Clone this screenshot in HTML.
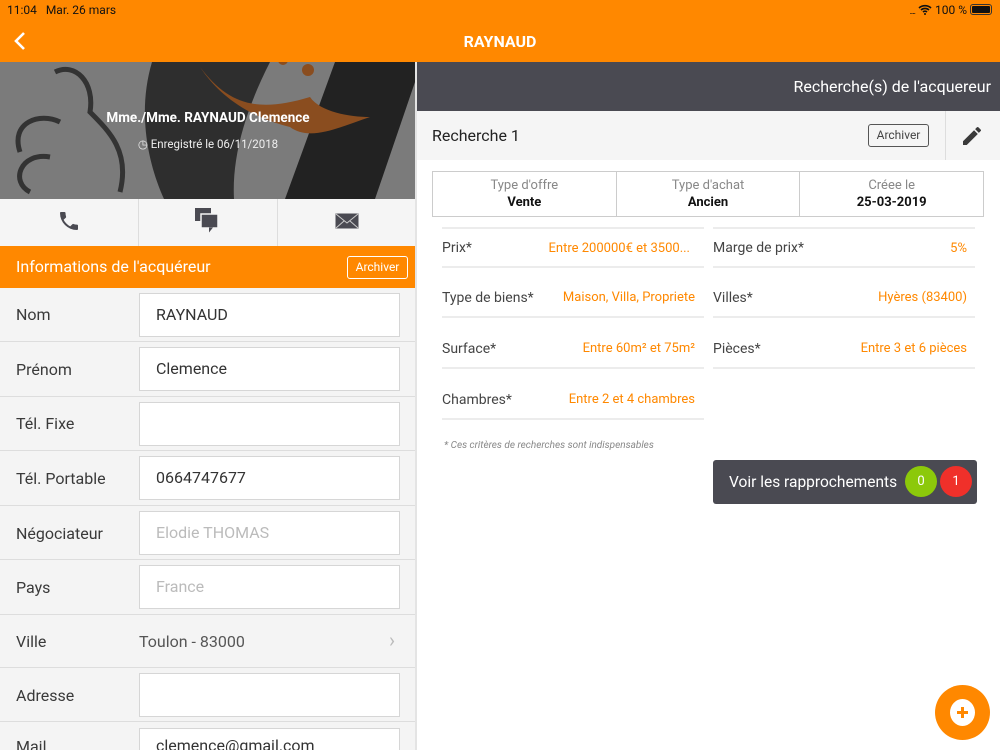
<!DOCTYPE html>
<html><head><meta charset="utf-8"><style>
*{box-sizing:border-box;margin:0;padding:0}
html,body{width:1000px;height:750px;overflow:hidden}
body{font-family:"Roboto","Liberation Sans",sans-serif;background:#fff;position:relative}
.abs{position:absolute}
.top{left:0;top:0;width:1000px;height:62px;background:#ff8800}
.row{position:absolute;left:0;width:416px;background:#f4f4f4;border-bottom:1px solid #ddd}
.row .l{position:absolute;left:16px;font-size:16px;color:#3a3a3a}
.row .in{position:absolute;left:139px;width:261px;height:44px;background:#fff;border:1px solid #d6d6d6;font-size:16px;color:#333;padding-left:16px;line-height:42px}
.crit{position:absolute;height:50px;border-bottom:2px solid #ececec;font-size:14px;color:#444}
.crit .k{position:absolute;left:0;top:12px}
.crit .v{position:absolute;right:8px;top:13px;color:#ff8800;font-size:13px}
</style></head><body>
<div class="abs top">
 <div class="abs" style="left:7px;top:3px;font-size:12px;color:#111">11:04&nbsp;&nbsp; Mar. 26 mars</div>
 <div class="abs" style="right:8px;top:3px;font-size:12px;color:#111">
  <span style="font-size:9px;letter-spacing:-1px">....</span> <svg width="14" height="11" viewBox="0 0 14 11" style="vertical-align:-1px"><path d="M1 4a9 9 0 0 1 12 0M3 6a6 6 0 0 1 8 0M5 8a3 3 0 0 1 4 0" stroke="#111" stroke-width="1.6" fill="none"/><circle cx="7" cy="10" r="1" fill="#111"/></svg> 100 % <span style="display:inline-block;width:22px;height:11px;border:1px solid #333;border-radius:3px;vertical-align:-1px;padding:1px"><span style="display:block;width:100%;height:100%;background:#111;border-radius:1px"></span></span>
 </div>
 <svg class="abs" style="left:13px;top:31px" width="14" height="20" viewBox="0 0 14 20"><path d="M11 2 3 10l8 8" stroke="#fff" stroke-width="2.6" fill="none"/></svg>
 <div class="abs" style="left:0;width:1000px;top:32px;text-align:center;color:#fff;font-weight:bold;font-size:16px">RAYNAUD</div>
</div>
<div class="abs" style="left:0;top:62px;width:416px;height:137px;background:#7b7b7b;overflow:hidden">
 <svg width="416" height="137" class="abs" style="left:0;top:0">
  <path d="M152 0h118c-28 55-38 100-36 137h-70c-18-40-26-90-12-137z" fill="#2e2e2e"/>
  <path d="M335 0h80v20l-40 117h-90z" fill="#222"/>
  <path d="M200 5c30 40 60 45 110 30 10 15 40 20 60 20-30 10-60 25-80 10-40-10-70-30-90-60z" fill="#8a4d1f"/>
  <circle cx="308" cy="8" r="6" fill="#8a4d1f"/><circle cx="283" cy="-2" r="5" fill="#8a4d1f"/>
  <path d="M55 10c20-10 40 10 35 40 20 20 40 40 30 80M20 90c-10-30 20-40 40-30M30 130c-20-10-10-40 20-35" stroke="#333" stroke-width="5" fill="none"/>
 </svg>
 <div class="abs" style="left:0;width:416px;top:48px;text-align:center;color:#fff;font-weight:bold;font-size:13.5px">Mme./Mme. RAYNAUD Clemence</div>
 <div class="abs" style="left:0;width:416px;top:75px;text-align:center;color:#eee;font-size:11.5px">◷ Enregistré le 06/11/2018</div>
</div>
<div class="abs" style="left:0;top:199px;width:416px;height:47px;background:#f5f5f5">
 <div class="abs" style="left:138px;top:0;width:1px;height:47px;background:#ddd"></div>
 <div class="abs" style="left:277px;top:0;width:1px;height:47px;background:#ddd"></div>
 <svg class="abs" style="left:57px;top:10px" width="24" height="24" viewBox="0 0 24 24"><path d="M6.6 10.8c1.4 2.8 3.8 5.1 6.6 6.6l2.2-2.2c.3-.3.7-.4 1-.2 1.1.4 2.3.6 3.6.6.6 0 1 .4 1 1V20c0 .6-.4 1-1 1A17 17 0 0 1 3 4c0-.6.4-1 1-1h3.5c.6 0 1 .4 1 1 0 1.3.2 2.5.6 3.6.1.3 0 .7-.2 1z" fill="#4a4a52"/></svg>
 <svg class="abs" style="left:194px;top:8px" width="28" height="28" viewBox="0 0 28 28"><rect x="1" y="1" width="16" height="13" fill="#4a4a52"/><rect x="7" y="7" width="17" height="14" fill="#4a4a52" stroke="#f5f5f5" stroke-width="1.5"/><path d="M15 20.5v5l4-5z" fill="#4a4a52"/></svg>
 <svg class="abs" style="left:335px;top:14px" width="24" height="16" viewBox="0 0 24 16"><rect x=".5" y=".5" width="23" height="15" fill="#4a4a52"/><path d="M1 1l11 9 11-9M1 15l8-7M23 15l-8-7" stroke="#ccc" stroke-width="1" fill="none"/></svg>
</div>
<div class="abs" style="left:0;top:246px;width:416px;height:42px;background:#ff8800">
 <div class="abs" style="left:16px;top:11px;color:#fff;font-size:16px">Informations de l'acquéreur</div>
 <div class="abs" style="left:347px;top:10px;width:61px;height:23px;border:1px solid #fff;border-radius:3px;color:#fff;font-size:12px;text-align:center;line-height:21px">Archiver</div>
</div>
<div class="row" style="top:288px;height:54px"><div class="l" style="top:17px">Nom</div><div class="in" style="top:5px">RAYNAUD</div></div>
<div class="row" style="top:342px;height:55px"><div class="l" style="top:18px">Prénom</div><div class="in" style="top:5px">Clemence</div></div>
<div class="row" style="top:397px;height:54px"><div class="l" style="top:17px">Tél. Fixe</div><div class="in" style="top:5px"></div></div>
<div class="row" style="top:451px;height:55px"><div class="l" style="top:18px">Tél. Portable</div><div class="in" style="top:5px">0664747677</div></div>
<div class="row" style="top:506px;height:54px"><div class="l" style="top:18px">Négociateur</div><div class="in" style="top:5px;color:#bbb">Elodie THOMAS</div></div>
<div class="row" style="top:560px;height:55px"><div class="l" style="top:18px">Pays</div><div class="in" style="top:5px;color:#bbb">France</div></div>
<div class="row" style="top:615px;height:53px"><div class="l" style="top:17px">Ville</div><div class="abs" style="left:139px;top:17px;font-size:16px;color:#555">Toulon - 83000</div><div class="abs" style="left:389px;top:13px;font-size:20px;color:#bbb">›</div></div>
<div class="row" style="top:668px;height:54px"><div class="l" style="top:18px">Adresse</div><div class="in" style="top:5px"></div></div>
<div class="row" style="top:722px;height:40px;border:none"><div class="l" style="top:15px">Mail</div><div class="in" style="top:6px;line-height:34px">clemence@gmail.com</div></div>
<div class="abs" style="left:415px;top:62px;width:2px;height:688px;background:#e4e4e4"></div>
<div class="abs" style="left:417px;top:62px;width:583px;height:49px;background:#4a4a52"><div class="abs" style="right:9px;top:15px;color:#fff;font-size:16px">Recherche(s) de l'acquereur</div></div>
<div class="abs" style="left:417px;top:111px;width:583px;height:49px;background:#f5f5f5">
 <div class="abs" style="left:15px;top:15px;font-size:16px;color:#222">Recherche 1</div>
 <div class="abs" style="left:451px;top:13px;width:61px;height:23px;border:1px solid #555;border-radius:3px;font-size:12px;color:#444;text-align:center;line-height:21px">Archiver</div>
 <div class="abs" style="left:528px;top:0;width:1px;height:49px;background:#ddd"></div>
 <svg class="abs" style="left:543px;top:13px" width="24" height="24" viewBox="0 0 24 24"><path d="M3 17.25V21h3.75L17.8 9.94l-3.75-3.75zM20.7 7.04a1 1 0 0 0 0-1.41l-2.34-2.34a1 1 0 0 0-1.41 0l-1.83 1.83 3.75 3.75z" fill="#3a3a3a"/></svg>
</div>
<div class="abs" style="left:432px;top:171px;width:552px;height:46px;border:1px solid #ccc;display:flex;font-size:13px;text-align:center">
 <div style="flex:1;border-right:1px solid #ccc;padding-top:6px;color:#888">Type d'offre<br><b style="color:#111;line-height:20px">Vente</b></div>
 <div style="flex:1;border-right:1px solid #ccc;padding-top:6px;color:#888">Type d'achat<br><b style="color:#111;line-height:20px">Ancien</b></div>
 <div style="flex:1;padding-top:6px;color:#888">Créee le<br><b style="color:#111;line-height:20px">25-03-2019</b></div>
</div>
<div class="abs" style="left:442px;top:227px;width:262px;height:2px;background:#ececec"></div>
<div class="abs" style="left:713px;top:227px;width:262px;height:2px;background:#ececec"></div>
<div class="crit" style="left:442px;top:229px;width:262px;height:39px"><div class="k" style="top:11px">Prix*</div><div class="v" style="top:12px;right:14px">Entre 200000€ et 3500...</div></div>
<div class="crit" style="left:713px;top:229px;width:262px;height:39px"><div class="k" style="top:11px">Marge de prix*</div><div class="v" style="top:12px">5%</div></div>
<div class="crit" style="left:442px;top:268px;width:262px"><div class="k" style="top:22px">Type de biens*</div><div class="v" style="top:22px;right:9px">Maison, Villa, Propriete</div></div>
<div class="crit" style="left:713px;top:268px;width:262px"><div class="k" style="top:22px">Villes*</div><div class="v" style="top:22px">Hyères (83400)</div></div>
<div class="crit" style="left:442px;top:319px;width:262px"><div class="k" style="top:22px">Surface*</div><div class="v" style="top:22px;right:9px">Entre 60m² et 75m²</div></div>
<div class="crit" style="left:713px;top:319px;width:262px"><div class="k" style="top:22px">Pièces*</div><div class="v" style="top:22px">Entre 3 et 6 pièces</div></div>
<div class="crit" style="left:442px;top:370px;width:262px"><div class="k" style="top:22px">Chambres*</div><div class="v" style="top:22px;right:9px">Entre 2 et 4 chambres</div></div>
<div class="abs" style="left:444px;top:440px;font-size:10px;font-style:italic;color:#888">* Ces critères de recherches sont indispensables</div>
<div class="abs" style="left:713px;top:460px;width:264px;height:44px;background:#4a4a52;border-radius:3px">
 <div class="abs" style="left:16px;top:13px;color:#fff;font-size:15.5px">Voir les rapprochements</div>
 <div class="abs" style="left:192px;top:6px;width:32px;height:31px;border-radius:50%;background:#8cc90a;color:#fff;font-size:13px;text-align:center;line-height:31px">0</div>
 <div class="abs" style="left:227px;top:6px;width:32px;height:31px;border-radius:50%;background:#f0302a;color:#fff;font-size:13px;text-align:center;line-height:31px">1</div>
</div>
<div class="abs" style="left:935px;top:685px;width:55px;height:55px;border-radius:50%;background:#ff8800"></div>
<div class="abs" style="left:950px;top:699px;width:25px;height:27px;border-radius:50%;background:#fff"></div>
<div class="abs" style="left:957px;top:711px;width:11px;height:3px;background:#ff8800"></div>
<div class="abs" style="left:961px;top:707px;width:3px;height:11px;background:#ff8800"></div>
</body></html>
